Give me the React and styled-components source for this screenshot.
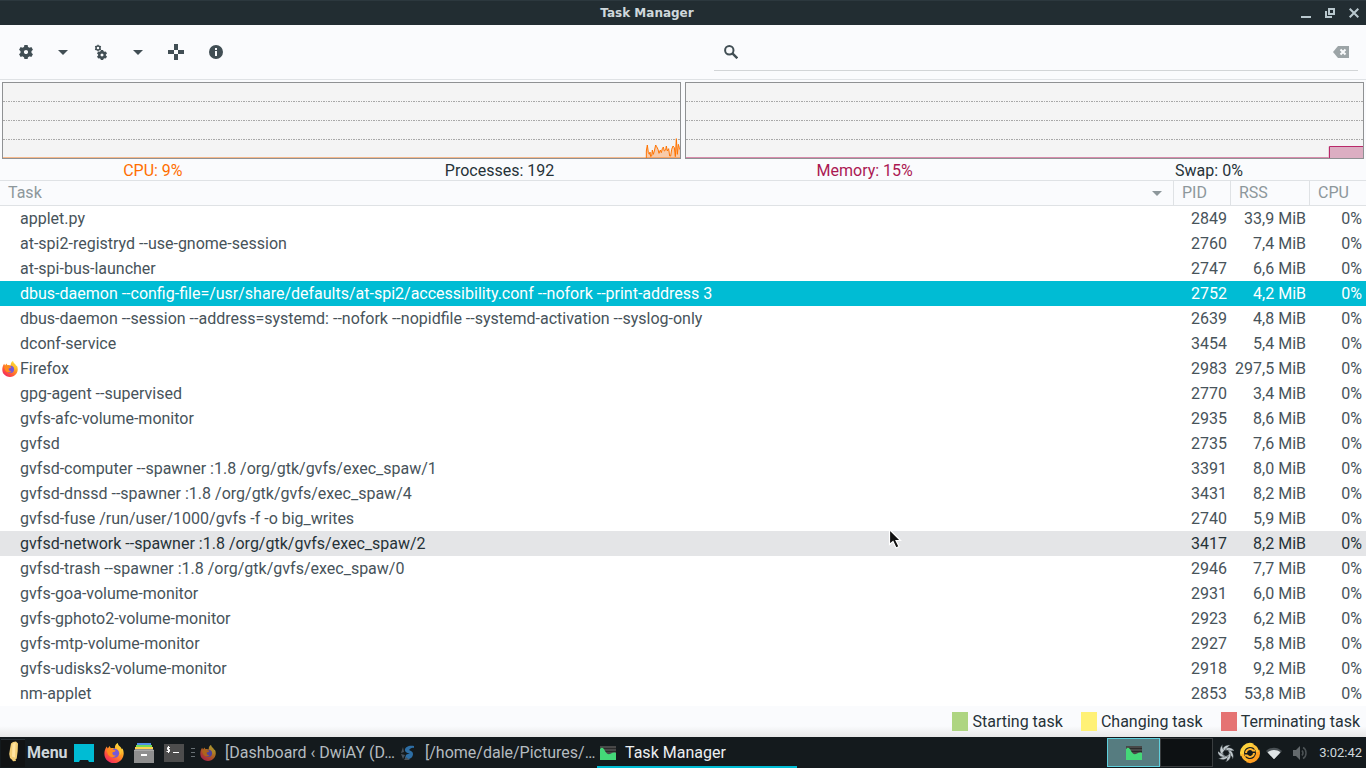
import React from "react";
import styled, { createGlobalStyle, css } from "styled-components";

const GlobalStyle = createGlobalStyle`
  *, *::before, *::after { box-sizing: border-box; }
  html, body, #root { height: 100%; }
  body {
    margin: 0;
    background: #fafbfd;
    color: #263238;
    font: 16px/20px Roboto, sans-serif;
    overflow: hidden;
  }
  button, input { font: inherit; color: inherit; }
  svg { display: block; flex: none; }
`;

const Desktop = styled.div`
  position: relative;
  min-height: 100vh;
  display: flex;
  flex-direction: column;
`;

const PlainButton = styled.button`
  display: flex;
  align-items: center;
  justify-content: center;
  padding: 0;
  border: 0;
  background: none;
  cursor: default;
`;

/* Title bar */
const TitleBar = styled.header`
  display: flex;
  align-items: center;
  height: 25px;
  background: #222d32;
  border-top: 1px solid #2c383e;
`;

const Title = styled.h1`
  flex: 1;
  margin: 0;
  text-align: center;
  color: #cfd8dc;
  font: 700 12px/24px "DejaVu Sans", sans-serif;
`;

const WindowControls = styled.div`
  display: flex;
`;

const WindowButton = styled(PlainButton)`
  width: 24px;
  height: 24px;
`;

/* Toolbar */
const Toolbar = styled.div`
  display: grid;
  grid-template-columns: 1fr 1fr;
  height: 55px;
  border-bottom: 1px solid #dfe2e5;
`;

const ToolGroup = styled.div`
  display: flex;
  align-items: center;
  padding-left: 10px;
`;

const ToolButton = styled(PlainButton)`
  width: ${(p) => p.$width}px;
  height: 32px;
  color: #414e54;
`;

const SearchArea = styled.div`
  display: flex;
  padding: 8px 8px 8px 31px;
`;

const SearchField = styled.label`
  display: flex;
  align-items: center;
  flex: 1;
  gap: 8px;
  padding: 0 9px 0 10px;
  border-bottom: 1px solid #d2d5d7;
  color: #414e54;
`;

const SearchInput = styled.input`
  flex: 1;
  min-width: 0;
  border: 0;
  outline: 0;
  background: none;
`;

/* Monitors */
const Monitors = styled.div`
  display: grid;
  grid-template-columns: 1fr 1fr;
  gap: 4px;
  padding: 2px 2px 0;
`;

const Graph = styled.div`
  display: flex;
  justify-content: flex-end;
  height: 77px;
  border: 1px solid #8f9193;
  background:
    linear-gradient(${(p) => p.$base}, ${(p) => p.$base}) bottom / 100% 1px no-repeat,
    #f4f4f4;
`;

const GridLines = styled.svg`
  flex: 1;
  width: 100%;
  min-width: 0;
  margin-right: -35px;
`;

const Stats = styled.div`
  display: flex;
  justify-content: space-around;
  gap: 16px;
  padding-top: 2px;
  height: 21px;
  line-height: 19px;
`;

const Stat = styled.span`
  color: ${(p) => p.$color || "#263238"};
`;

/* Process table */
const ProcessTable = styled.table`
  width: 100%;
  table-layout: fixed;
  border-collapse: separate;
  border-spacing: 0;
  background: #fff;
`;

const Column = styled.col`
  width: ${(p) => p.$width};
`;

const HeadCell = styled.th`
  height: 26px;
  padding: 0;
  border: solid #dfe2e5;
  border-width: 1px 0 1px ${(p) => (p.$first ? "0" : "1px")};
  background: #fafbfd;
  font-weight: 400;
`;

const SortButton = styled(PlainButton)`
  justify-content: space-between;
  width: 100%;
  height: 24px;
  padding: 0 11px 0 8px;
  color: #8d979b;
`;

const Row = styled.tr`
  color: #47535a;
  ${(p) => p.$state === "selected" && css`
    background: #00bcd4;
    color: #fff;
  `}
  ${(p) => p.$state === "hovered" && css`
    background: #e4e5e7;
    color: #263238;
  `}
`;

const Cell = styled.td`
  height: 25px;
  padding: 0 3px;
  text-align: right;
  line-height: 25px;
  white-space: nowrap;

  &:last-child { padding-right: 4px; }
`;

const TaskCell = styled(Cell)`
  padding: 0 2px;
  text-align: left;
`;

const TaskName = styled.div`
  display: flex;
  align-items: center;
  padding-left: ${(p) => (p.$icon ? "0" : "18px")};
  gap: 2px;
`;

/* Legend */
const Legend = styled.div`
  display: flex;
  justify-content: flex-end;
  align-items: center;
  gap: 18px;
  flex: 1;
  padding-right: 6px;
  background: linear-gradient(#fafbfd 20px, #e8e8e8);
`;

const LegendItem = styled.span`
  display: flex;
  align-items: center;
  gap: 4px;
`;

const Swatch = styled.i`
  width: 16px;
  height: 19px;
  background: ${(p) => p.$color};
`;

/* Panel */
const Panel = styled.footer`
  display: flex;
  align-items: center;
  height: 31px;
  background: #141a1d;
  color: #cfd8dc;
`;

const MenuButton = styled(PlainButton)`
  gap: 2px;
  width: 69px;
  height: 31px;
  padding-left: 1px;
  justify-content: flex-start;
  font-weight: 700;
`;

const Launcher = styled(PlainButton)`
  width: 30px;
  height: 31px;
`;

const Handle = styled.div`
  width: 8px;
  padding-left: 2px;
`;

const TaskButton = styled(PlainButton)`
  justify-content: flex-start;
  gap: 9px;
  width: 200px;
  height: 31px;
  padding-left: 3px;
  color: ${(p) => (p.$active ? "#eceff1" : "#b4bcc0")};
  box-shadow: ${(p) => (p.$active ? "inset 0 -2px #00bcd4" : "none")};
  white-space: nowrap;
`;

const Dimmed = styled.span`
  opacity: 0.65;
`;

const Pager = styled.div`
  display: flex;
  margin-left: auto;
`;

const Workspace = styled(PlainButton)`
  width: 53px;
  height: 29px;
  border: 1px solid ${(p) => (p.$active ? "#5fd0de" : "#3a3e40")};
  background: ${(p) => (p.$active ? "#567c80" : "#0d1113")};
`;

const Tray = styled.div`
  display: flex;
  align-items: center;
  gap: 5px;
  padding: 0 4px 0 5px;
`;

const Clock = styled.time`
  padding-left: 5px;
  font-size: 13px;
`;

const Pointer = styled.svg`
  position: absolute;
  left: 888px;
  top: 528px;
  pointer-events: none;
`;

const teeth = (n) => Array.from({ length: n }, (_, i) => (i * 360) / n);

const Gear = ({ x = 8, y = 8, scale = 1 }) => (
  <g transform={`translate(${x} ${y}) scale(${scale})`}>
    <circle r="3.8" fill="none" stroke="currentColor" strokeWidth="3.4" />
    {teeth(6).map((a) => (
      <path key={a} d="M-2.100-4.600-1.600-7.100H1.600L2.100-4.600z" fill="currentColor" transform={`rotate(${a})`} />
    ))}
  </g>
);

const GearIcon = () => <svg width="16" height="16"><Gear /></svg>;

const GearsIcon = () => (
  <svg width="16" height="16">
    <circle cx="5" cy="4" r="2" fill="none" stroke="currentColor" strokeWidth="1.500" />
    {teeth(6).map((a) => (
      <path key={a} d="M-.7-2.300V-3.300H.7V-2.300z" fill="currentColor" transform={`translate(5 4) rotate(${a})`} />
    ))}
    <Gear x={9} y={11} scale={0.72} />
  </svg>
);

const Caret = () => (
  <svg width="10" height="5"><path d="M0 0h10L5 5z" fill="currentColor" /></svg>
);

const CrosshairIcon = () => (
  <svg width="16" height="16">
    <path d="M6 0h4v6H6zM6 10h4v6H6zM0 6h6v4H0zM10 6h6v4h-6z" fill="currentColor" />
  </svg>
);

const InfoIcon = () => (
  <svg width="14" height="14">
    <path fillRule="evenodd" d="M7 0a7 7 0 1 0 0 14A7 7 0 0 0 7 0zM6 3h2v2H6zM6 6h2v5H6z" fill="currentColor" />
  </svg>
);

const SearchIcon = () => (
  <svg width="14" height="14" fill="none" stroke="currentColor" strokeWidth="2">
    <circle cx="5.3" cy="5.3" r="4.2" />
    <path d="M8.4 8.4 13.3 13.3" strokeWidth="2.4" />
  </svg>
);

const ClearIcon = () => (
  <svg width="16" height="12">
    <path d="M5 0h11v12H5L0 6z" fill="#9ca4a7" />
    <path d="m7.500 3.500 5 5m0-5-5 5" stroke="#fafbfd" strokeWidth="2" />
  </svg>
);

const FirefoxIcon = ({ size = 16 }) => (
  <svg width={size} height={size} viewBox="0 0 20 20">
    <defs>
      <linearGradient id="flame" x1="0.85" y1="0.05" x2="0.2" y2="0.95">
        <stop offset="0" stopColor="#fff04a" />
        <stop offset="0.4" stopColor="#ff9a22" />
        <stop offset="0.75" stopColor="#ff513e" />
        <stop offset="1" stopColor="#f02862" />
      </linearGradient>
    </defs>
    <path d="M2.700 3.500 3.800 5.600 5.600 3l1.200 2.200C8.500 4.700 10 5 11 5.500 10.600 3 11.700 1 13.800 0c.3 3.200 3.200 3.400 4 6.200l.7-.6C20.400 9 20 13 17.600 16.400c-3.800 4.800-11.500 4.800-15.400 0C-.3 13.300-.3 7.500 2.700 3.500z" fill="url(#flame)" />
    <circle cx="10.600" cy="10.300" r="4.500" fill="#7659d8" />
    <path d="M2.500 7.500c2-2 4.800-2.400 7-.8l2 .5c.1 1.200-1.500 1.900-2.900 2-.8 2.200.8 3.800 3.200 3.200-2 3-7.300 1.900-8.200-1.800z" fill="#ff8a1c" />
    <path d="M12.700 5.600c2.600 1.600 3.800 4 2.900 7 2.300-2.200 2.200-5.700.2-7.800L13.700 2z" fill="#ffc42f" />
  </svg>
);

const MenuIcon = () => (
  <svg width="24" height="28">
    <path d="M0 0h24v28H0z" fill="#111314" />
    <path d="M0 .5h24" stroke="#293035" />
    <path d="M10 4.500 12 3l3-.5 2 2-.3 7.500-1 7.500-1.200 1 .5 1.500-3 .2-1-1.400-2-1.800-.8-4L9 10z" fill="#f3ce76" />
    <path d="m11.500 5 3-1.500-.5 15-3-1z" fill="#ffe3a0" />
  </svg>
);

const DesktopIcon = () => (
  <svg width="20" height="18">
    <path d="M0 0h20v18h-5l-1-2H6l-1 2H0z" fill="#00bcd4" />
  </svg>
);

const CabinetIcon = () => (
  <svg width="20" height="20">
    <path d="M3 0h14v3H3z" fill="#4f8ee8" />
    <path d="M2 2h16v3H2z" fill="#71d85b" />
    <path d="M1 4h18v3H1z" fill="#ffd34f" />
    <path d="M1 6h18l1 2v12H0V8z" fill="#8f8f8f" />
    <path d="M0 7.500h20" stroke="#a9a9a9" />
    <path d="M7 11h6v2H7z" fill="#fff" />
  </svg>
);

const TerminalIcon = () => (
  <svg width="20" height="18" fill="none" stroke="#fff">
    <path d="M0 0h20v18H0z" fill="#4d4d4d" stroke="none" />
    <path d="M6 3.500H3.500v2H5.500v2H2.500M4.500 2v7M9 8.500h6" />
  </svg>
);

const MonitorIcon = () => (
  <svg width="16" height="14">
    <path d="M0 0h16v14H0z" fill="#484848" />
    <path d="M0 2.500h16M0 5.500h16" stroke="#2b2b2b" />
    <path d="M0 14V3c2-2.500 4-.5 5 2 1.500 3 3.500 4 6 2.500 1.500-.8 3.500-1.500 5-.5v7z" fill="#44d878" />
  </svg>
);

const SwirlIcon = () => (
  <svg width="16" height="18" viewBox="-8 -9 16 18">
    {teeth(7).map((a) => (
      <path key={a} d="M-3.500-1.500C-4-5-1-8.500 4.500-8 2-7 1-5 .8-2.600-.8-3.200-2.500-2.800-3.500-1.500z" fill="#c3cbcf" stroke="#2a3135" strokeWidth=".4" transform={`rotate(${a})`} />
    ))}
  </svg>
);

const BlueSwirlIcon = () => (
  <svg width="16" height="16">
    <path d="M14 1C9 0 5 2 5 5c0 2.600 3 3 5 4-2-.2-3 0-4 1l-1 3C8 16 13 13 13 9c0-2.500-2-3-4-4 2-2 3-2.500 5-2z" fill="#2d6ea5" />
    <path d="M3 2 1 8l3-1zM1 9l2 5 2-4zM4 15h6l-4-3z" fill="#49535d" />
  </svg>
);

const UpdateIcon = () => (
  <svg width="22" height="22" fill="none" strokeWidth="4">
    <path d="M14 3.500A8 8 0 0 0 3.500 13.500" stroke="#ffd13c" />
    <path d="M8 18.500A8 8 0 0 0 18.500 8.500" stroke="#ff9e20" />
    <path d="M3.500 12A8 8 0 0 0 9 18.500" stroke="#ffb52b" strokeWidth="3" />
    <path d="M18.500 10A8 8 0 0 0 13 3.500" stroke="#ffc338" strokeWidth="3" />
    <path d="M7 11a4 4 0 0 1 7-2.500h2M15 11a4 4 0 0 1-7 2.500H6" stroke="#ffb32b" strokeWidth="2" />
  </svg>
);

const WifiIcon = () => (
  <svg width="16" height="12">
    <path d="M0 4c5-4.500 11-4.500 16 0L8 12z" fill="#4b5256" />
    <path d="M2.500 6.300c3.500-2.500 7.500-2.500 11 0L8 12z" fill="#e4e8ea" />
    <path d="M1.500 5.200c4-3 9-3 13 0L8 12z" fill="#dfe4e6" />
  </svg>
);

const VolumeIcon = () => (
  <svg width="22" height="14" viewBox="-6 0 22 14" fill="none" stroke="#4d5356">
    <path d="M0 4h3l4-4v14l-4-4H0z" fill="#63696c" stroke="none" />
    <path d="M9 4.500q2 2.500 0 5M10 1.500c4 2 4 9 0 11" strokeWidth="1.500" />
  </svg>
);

const processes = [
  ["applet.py", 2849, "33,9"],
  ["at-spi2-registryd --use-gnome-session", 2760, "7,4"],
  ["at-spi-bus-launcher", 2747, "6,6"],
  ["dbus-daemon --config-file=/usr/share/defaults/at-spi2/accessibility.conf --nofork --print-address 3", 2752, "4,2", "selected"],
  ["dbus-daemon --session --address=systemd: --nofork --nopidfile --systemd-activation --syslog-only", 2639, "4,8"],
  ["dconf-service", 3454, "5,4"],
  ["Firefox", 2983, "297,5"],
  ["gpg-agent --supervised", 2770, "3,4"],
  ["gvfs-afc-volume-monitor", 2935, "8,6"],
  ["gvfsd", 2735, "7,6"],
  ["gvfsd-computer --spawner :1.8 /org/gtk/gvfs/exec_spaw/1", 3391, "8,0"],
  ["gvfsd-dnssd --spawner :1.8 /org/gtk/gvfs/exec_spaw/4", 3431, "8,2"],
  ["gvfsd-fuse /run/user/1000/gvfs -f -o big_writes", 2740, "5,9"],
  ["gvfsd-network --spawner :1.8 /org/gtk/gvfs/exec_spaw/2", 3417, "8,2", "hovered"],
  ["gvfsd-trash --spawner :1.8 /org/gtk/gvfs/exec_spaw/0", 2946, "7,7"],
  ["gvfs-goa-volume-monitor", 2931, "6,0"],
  ["gvfs-gphoto2-volume-monitor", 2923, "6,2"],
  ["gvfs-mtp-volume-monitor", 2927, "5,8"],
  ["gvfs-udisks2-volume-monitor", 2918, "9,2"],
  ["nm-applet", 2853, "53,8"],
];

const cpuLine =
  "M139 246 139 225 142 207 145 230 148 235 150 228 152 242 155 240 157 222 160 235 163 225 167 207 170 212 174 220 177 232 181 222 184 230 187 218 190 213 193 225 197 222 199 210 202 225 206 218 209 240 212 240 215 220 219 210 223 215 226 242 229 188 232 235 235 205 238 215 241 222";

const MonitorGraph = ({ label, base, children }) => (
  <Graph role="img" aria-label={label} $base={base}>
    <GridLines height="75">
      {[18, 37, 56].map((y) => (
        <line key={y} x1="0" x2="100%" y1={y + 0.5} y2={y + 0.5} stroke="#a8a8a8" strokeDasharray="2 1 1 1" />
      ))}
    </GridLines>
    {children}
  </Graph>
);

export default function App() {
  return (
    <Desktop>
      <GlobalStyle />
      <TitleBar>
        <Title>Task Manager</Title>
        <WindowControls>
          <WindowButton aria-label="Minimize">
            <svg width="10" height="10"><path d="M0 8h10v2H0z" fill="#b9c8ce" /></svg>
          </WindowButton>
          <WindowButton aria-label="Restore">
            <svg width="10" height="10" fill="none" stroke="#b9c8ce" strokeWidth="2">
              <path d="M4 1h5v5H4zM1 3v6h6" />
            </svg>
          </WindowButton>
          <WindowButton aria-label="Close">
            <svg width="10" height="10"><path d="m.7.7 8.600 8.600m0-8.600L.7 9.300" stroke="#b9c8ce" strokeWidth="2" /></svg>
          </WindowButton>
        </WindowControls>
      </TitleBar>

      <Toolbar>
        <ToolGroup>
          <ToolButton $width={32} aria-label="Settings"><GearIcon /></ToolButton>
          <ToolButton $width={42} aria-label="Settings menu"><Caret /></ToolButton>
          <ToolButton $width={34} aria-label="Process actions"><GearsIcon /></ToolButton>
          <ToolButton $width={40} aria-label="Process actions menu"><Caret /></ToolButton>
          <ToolButton $width={36} aria-label="Identify window"><CrosshairIcon /></ToolButton>
          <ToolButton $width={44} aria-label="About"><InfoIcon /></ToolButton>
        </ToolGroup>
        <SearchArea>
          <SearchField>
            <SearchIcon />
            <SearchInput type="text" aria-label="Filter on process name" />
            <PlainButton aria-label="Clear"><ClearIcon /></PlainButton>
          </SearchField>
        </SearchArea>
      </Toolbar>

      <Monitors>
        <MonitorGraph label="CPU history" base="#f6b98c">
          <svg width="35" height="75" viewBox="135 21 105 225">
            <path d={cpuLine + "V246z"} fill="#ff6e00" fillOpacity="0.3" />
            <path d={cpuLine} fill="none" stroke="#ff7300" strokeWidth="3" />
          </svg>
        </MonitorGraph>
        <MonitorGraph label="Memory history" base="#d88bab">
          <svg width="35" height="75">
            <path d="M.5 75V63.500H35V75z" fill="#dcaec2" />
            <path d="M1.500 75V63.500H35" fill="none" stroke="#b9296a" />
          </svg>
        </MonitorGraph>
      </Monitors>
      <Stats>
        <Stat $color="#ff6e00">CPU: 9%</Stat>
        <Stat>Processes: 192</Stat>
        <Stat $color="#ab1852">Memory: 15%</Stat>
        <Stat>Swap: 0%</Stat>
      </Stats>

      <ProcessTable>
        <colgroup>
          <Column />
          <Column $width="57px" />
          <Column $width="79px" />
          <Column $width="57px" />
        </colgroup>
        <thead>
          <tr>
            <HeadCell $first><SortButton>Task<Caret /></SortButton></HeadCell>
            <HeadCell><SortButton>PID</SortButton></HeadCell>
            <HeadCell><SortButton>RSS</SortButton></HeadCell>
            <HeadCell><SortButton>CPU</SortButton></HeadCell>
          </tr>
        </thead>
        <tbody>
          {processes.map(([name, pid, rss, state]) => (
            <Row key={pid} $state={state}>
              <TaskCell>
                <TaskName $icon={name === "Firefox"}>
                  {name === "Firefox" && <FirefoxIcon />}
                  {name}
                </TaskName>
              </TaskCell>
              <Cell>{pid}</Cell>
              <Cell>{rss} MiB</Cell>
              <Cell>0%</Cell>
            </Row>
          ))}
        </tbody>
      </ProcessTable>

      <Legend>
        <LegendItem><Swatch $color="#aed581" />Starting task</LegendItem>
        <LegendItem><Swatch $color="#fff176" />Changing task</LegendItem>
        <LegendItem><Swatch $color="#e57373" />Terminating task</LegendItem>
      </Legend>

      <Panel>
        <MenuButton><MenuIcon />Menu</MenuButton>
        <Launcher aria-label="Show desktop"><DesktopIcon /></Launcher>
        <Launcher aria-label="Firefox"><FirefoxIcon size={20} /></Launcher>
        <Launcher aria-label="Files"><CabinetIcon /></Launcher>
        <Launcher aria-label="Terminal"><TerminalIcon /></Launcher>
        <Handle>
          <svg width="4" height="10"><path d="M0 .5h4M0 4.500h4M0 8.500h4" stroke="#687074" /></svg>
        </Handle>
        <TaskButton><Dimmed><FirefoxIcon /></Dimmed>[Dashboard ‹ DwiAY (D…</TaskButton>
        <TaskButton><BlueSwirlIcon />[/home/dale/Pictures/…</TaskButton>
        <TaskButton $active><MonitorIcon />Task Manager</TaskButton>
        <Pager>
          <Workspace $active aria-label="Workspace 1"><MonitorIcon /></Workspace>
          <Workspace aria-label="Workspace 2" />
        </Pager>
        <Tray>
          <SwirlIcon />
          <UpdateIcon />
          <WifiIcon />
          <VolumeIcon />
          <Clock>3:02:42</Clock>
        </Tray>
      </Panel>
      <Pointer width="16" height="22">
        <path d="M1.500 1.500v15l3.500-3 3 6.500 3-1.500-3-6h4.500z" fill="#111" stroke="#fff" strokeWidth="1.200" />
      </Pointer>
    </Desktop>
  );
}
